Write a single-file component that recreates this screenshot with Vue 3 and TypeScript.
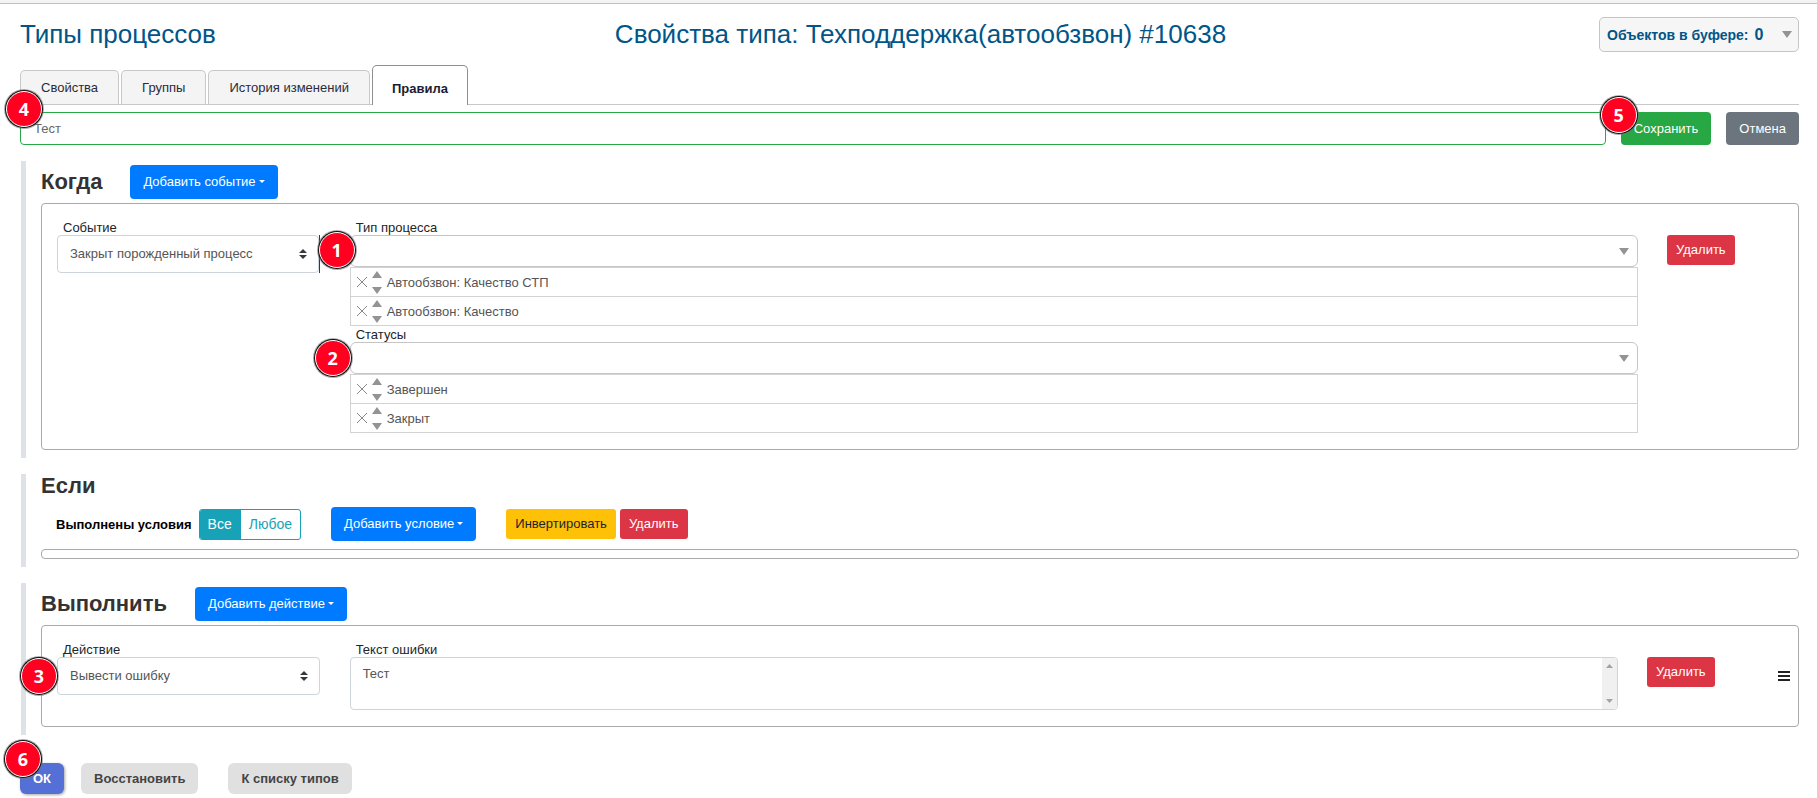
<script setup lang="ts">
import { ref } from 'vue'

interface ListField {
  id: string
  label: string
  marker: string
  items: string[]
}

const tabs: string[] = ['Свойства', 'Группы', 'История изменений', 'Правила']
const activeTab = ref('Правила')
const ruleName = ref('Тест')
const errorText = ref('Тест')
const matchMode = ref('all')

const listFields: ListField[] = [
  { id: 'process-type', label: 'Тип процесса', marker: '1', items: ['Автообзвон: Качество СТП', 'Автообзвон: Качество'] },
  { id: 'statuses', label: 'Статусы', marker: '2', items: ['Завершен', 'Закрыт'] },
]
</script>

<template>
  <div class="page">
    <div class="strip"></div>
    <main class="content">
      <header class="head">
        <h1 class="title">Типы процессов</h1>
        <h2 class="title title-center">Свойства типа: Техподдержка(автообзвон) #10638</h2>
        <div class="head-side">
          <button type="button" class="buffer">
            <span>Объектов в буфере: <span class="count">0</span></span>
            <svg width="10" height="7" viewBox="0 0 10 7"><path d="M0 0h10L5 7z" fill="#939393" /></svg>
          </button>
        </div>
      </header>

      <nav class="tabs">
        <button
          v-for="tab in tabs"
          :key="tab"
          type="button"
          class="tab"
          :class="{ active: tab === activeTab }"
          @click="activeTab = tab"
        >{{ tab }}</button>
      </nav>

      <div class="name-row">
        <div class="name-field">
          <input v-model="ruleName" class="name-input" type="text" aria-label="Название правила" />
          <span class="marker m4">4</span>
        </div>
        <div class="anchor">
          <button type="button" class="btn green">Сохранить</button>
          <span class="marker m5">5</span>
        </div>
        <button type="button" class="btn gray">Отмена</button>
      </div>

      <section class="block">
        <div class="block-head">
          <h3 class="block-title">Когда</h3>
          <button type="button" class="btn blue">Добавить событие<i class="caret"></i></button>
        </div>
        <div class="box">
          <div class="col-narrow">
            <label class="label" for="event">Событие</label>
            <div class="select-wrap focus-edge">
              <select id="event" class="select">
                <option>Закрыт порожденный процесс</option>
              </select>
              <svg class="sort" width="8" height="10" viewBox="0 0 8 10"><path d="M4 0l4 4H0zM4 10l4-4H0z" fill="#343a40" /></svg>
            </div>
          </div>
          <div class="col-wide stack">
            <div v-for="field in listFields" :key="field.id">
              <label class="label" :for="field.id">{{ field.label }}</label>
              <div class="combo">
                <input :id="field.id" class="combo-input" type="text" />
                <svg class="combo-arrow" width="10" height="7" viewBox="0 0 10 7"><path d="M0 0h10L5 7z" fill="#939393" /></svg>
                <span class="marker" :class="'m' + field.marker">{{ field.marker }}</span>
              </div>
              <ul class="picked">
                <li v-for="item in field.items" :key="item" class="picked-item">
                  <button type="button" class="icon-btn" aria-label="Убрать">
                    <svg width="10" height="10" viewBox="0 0 10 10"><path d="M0 0l10 10M10 0L0 10" stroke="#888" stroke-width="1" /></svg>
                  </button>
                  <span class="movers">
                    <button type="button" class="icon-btn" aria-label="Выше">
                      <svg width="10" height="7" viewBox="0 0 10 7"><path d="M0 7h10L5 0z" fill="#939393" /></svg>
                    </button>
                    <button type="button" class="icon-btn" aria-label="Ниже">
                      <svg width="10" height="7" viewBox="0 0 10 7"><path d="M0 0h10L5 7z" fill="#939393" /></svg>
                    </button>
                  </span>
                  <span>{{ item }}</span>
                </li>
              </ul>
            </div>
          </div>
          <div class="col-tail">
            <button type="button" class="btn small red">Удалить</button>
          </div>
        </div>
      </section>

      <section class="block flush">
        <h3 class="block-title">Если</h3>
        <div class="cond-row">
          <span id="cond-label" class="cond-label">Выполнены условия</span>
          <div class="segment" role="radiogroup" aria-labelledby="cond-label">
            <label class="seg" :class="{ on: matchMode === 'all' }">
              <input v-model="matchMode" class="seg-radio" type="radio" name="match" value="all" />Все
            </label>
            <label class="seg" :class="{ on: matchMode === 'any' }">
              <input v-model="matchMode" class="seg-radio" type="radio" name="match" value="any" />Любое
            </label>
          </div>
          <button type="button" class="btn blue">Добавить условие<i class="caret"></i></button>
          <div class="pair">
            <button type="button" class="btn small yellow">Инвертировать</button>
            <button type="button" class="btn small red">Удалить</button>
          </div>
        </div>
        <div class="box empty"></div>
      </section>

      <section class="block">
        <div class="block-head">
          <h3 class="block-title">Выполнить</h3>
          <button type="button" class="btn blue">Добавить действие<i class="caret"></i></button>
        </div>
        <div class="box">
          <div class="col-narrow">
            <label class="label" for="action">Действие</label>
            <div class="select-wrap">
              <select id="action" class="select">
                <option>Вывести ошибку</option>
              </select>
              <svg class="sort" width="8" height="10" viewBox="0 0 8 10"><path d="M4 0l4 4H0zM4 10l4-4H0z" fill="#343a40" /></svg>
              <span class="marker m3">3</span>
            </div>
          </div>
          <div class="col-wide">
            <label class="label" for="error-text">Текст ошибки</label>
            <div class="area-wrap">
              <textarea id="error-text" v-model="errorText" class="area"></textarea>
              <div class="scroll-track" aria-hidden="true">
                <svg width="7" height="4" viewBox="0 0 7 4"><path d="M0 4h7L3.5 0z" fill="#a3a3a3" /></svg>
                <svg width="7" height="4" viewBox="0 0 7 4"><path d="M0 0h7L3.5 4z" fill="#a3a3a3" /></svg>
              </div>
            </div>
          </div>
          <div class="col-tail with-handle">
            <button type="button" class="btn small red">Удалить</button>
            <button type="button" class="icon-btn handle" aria-label="Переместить">
              <svg width="12" height="10" viewBox="0 0 12 10"><path d="M0 0h12v2H0zM0 4h12v2H0zM0 8h12v2H0z" fill="#222" /></svg>
            </button>
          </div>
        </div>
      </section>

      <footer class="foot">
        <div class="anchor ok-wrap">
          <button type="button" class="foot-btn ok">ОК</button>
          <span class="marker m6">6</span>
        </div>
        <div class="foot-rest">
          <button type="button" class="foot-btn">Восстановить</button>
          <button type="button" class="foot-btn">К списку типов</button>
        </div>
      </footer>
    </main>
  </div>
</template>

<style>
body {
  margin: 0;
  background: #fff;
}
</style>

<style scoped>
.page,
.page * {
  box-sizing: border-box;
}
.page {
  font-family: "Liberation Sans", Arial, sans-serif;
  font-size: 13px;
  line-height: 15px;
  color: #212529;
}
button,
input,
select,
textarea {
  font-family: inherit;
  font-size: inherit;
  margin: 0;
}
.strip {
  height: 4px;
  background: #f4f4f4;
  border-bottom: 1px solid #c0c0c0;
}
.content {
  padding: 13px 18px 4px 20px;
}
.head {
  display: grid;
  grid-template-columns: 1fr auto 1fr;
  align-items: start;
}
.title {
  margin: 0;
  font-size: 26px;
  line-height: 34px;
  font-weight: 400;
  color: #005589;
}
.title-center {
  padding-left: 22px;
}
.head-side {
  display: flex;
  justify-content: flex-end;
}
.buffer {
  display: flex;
  align-items: center;
  justify-content: space-between;
  width: 200px;
  height: 35px;
  padding: 0 6px 0 7px;
  border: 1px solid #c5c5c5;
  border-radius: 5px;
  background: #f6f6f6;
  color: #005589;
  font-weight: 700;
  font-size: 14px;
  white-space: nowrap;
}
.count {
  margin-left: 2px;
  font-size: 16px;
}
.tabs {
  display: flex;
  align-items: flex-end;
  gap: 2px;
  margin-top: 13px;
  border-bottom: 1px solid #c8c8c8;
}
.tab {
  height: 34px;
  padding: 0 20px;
  border: 1px solid #c8c8c8;
  border-bottom: 0;
  border-radius: 5px 5px 0 0;
  background: #f4f4f4;
  color: #2b2b3b;
}
.tab.active {
  height: 40px;
  margin-bottom: -1px;
  padding: 6px 19px 0;
  border-color: #8f8f8f;
  background: #fff;
  color: #1b1b33;
  font-weight: 700;
}
.name-row {
  display: flex;
  gap: 15px;
  margin-top: 7px;
}
.name-field {
  position: relative;
  flex: 1;
}
.name-input {
  display: block;
  width: 100%;
  height: 33px;
  padding: 0 13px;
  border: 1px solid #28a745;
  border-radius: 4px;
  background: #fff;
  color: #666;
  outline: 0;
}
.anchor {
  position: relative;
}
.btn {
  height: 33px;
  padding: 0 13px;
  border: 0;
  border-radius: 4px;
  color: #fff;
  white-space: nowrap;
}
.green {
  background: #28a745;
}
.gray {
  background: #6c757d;
}
.blue {
  height: 34px;
  padding-bottom: 1px;
  background: #007bff;
}
.red {
  background: #dc3545;
}
.yellow {
  background: #ffc107;
  color: #212529;
}
.small {
  height: 30px;
  padding: 0 9px 2px;
  border-radius: 3px;
}
.caret {
  display: inline-block;
  margin-left: 3px;
  vertical-align: 3px;
  border-top: 3px solid;
  border-left: 3px solid transparent;
  border-right: 3px solid transparent;
}
.block {
  margin: 16px 0 0 1px;
  padding: 4px 0 8px 15px;
  border-left: 5px solid #dee2e6;
}
.block.flush {
  padding-top: 0;
}
.block-head {
  display: flex;
  align-items: center;
  gap: 28px;
  margin-bottom: 4px;
}
.block-title {
  margin: 0;
  padding-bottom: 2px;
  font-size: 22px;
  line-height: 23px;
  font-weight: 700;
  color: #333;
}
.box {
  display: flex;
  padding: 16px 0;
  border: 1px solid #a9a9a9;
  border-radius: 4px;
}
.box.empty {
  padding: 4px 0;
}
.col-narrow {
  flex: 0 0 16.6667%;
  padding: 0 15px;
}
.col-wide {
  flex: 1;
  min-width: 0;
  padding: 0 15px;
}
.stack {
  display: flex;
  flex-direction: column;
  gap: 1px;
}
.col-tail {
  flex: 0 0 145px;
  padding: 15px 8px 0 14px;
}
.col-tail.with-handle {
  flex-basis: 165px;
  display: flex;
  justify-content: space-between;
  align-items: flex-start;
}
.label {
  display: block;
  height: 15px;
  padding-left: 6px;
}
.select-wrap,
.combo,
.area-wrap {
  position: relative;
}
.select {
  display: block;
  width: 100%;
  height: 38px;
  padding: 0 30px 2px 12px;
  border: 1px solid #ced4da;
  border-radius: 4px;
  background: #fff;
  color: #555;
  appearance: none;
}
.focus-edge {
  border-right: 1px solid #343a40;
}
.sort {
  position: absolute;
  right: 12px;
  top: 14px;
}
.combo-input {
  display: block;
  width: 100%;
  height: 32px;
  padding: 0 28px 0 10px;
  border: 1px solid #c5c5c5;
  border-radius: 6px;
  background: #fff;
  outline: 0;
}
.combo-arrow {
  position: absolute;
  right: 9px;
  top: 13px;
}
.picked {
  margin: 0;
  padding: 0;
  list-style: none;
  border: 1px solid #d3d3d3;
  color: #555;
}
.picked-item {
  display: flex;
  align-items: center;
  gap: 5px;
  height: 28px;
  padding-left: 6px;
}
.picked-item + .picked-item {
  height: 29px;
  border-top: 1px solid #d3d3d3;
}
.icon-btn {
  display: block;
  padding: 0;
  border: 0;
  background: none;
  line-height: 0;
}
.icon-btn svg {
  display: block;
}
.movers {
  display: flex;
  flex-direction: column;
  gap: 9px;
}
.cond-row {
  display: flex;
  align-items: center;
  gap: 30px;
  margin: 8px 0;
  padding-left: 15px;
}
.cond-label {
  margin-right: -23px;
  font-weight: 700;
  color: #000;
}
.segment {
  display: flex;
  height: 31px;
  border: 1px solid #17a2b8;
  border-radius: 3px;
  overflow: hidden;
}
.seg {
  padding: 0 8px;
  font-size: 14px;
  line-height: 28px;
  color: #17a2b8;
}
.seg.on {
  padding: 0 9px 0 8px;
  background: #17a2b8;
  color: #fff;
}
.seg-radio {
  position: absolute;
  opacity: 0;
  pointer-events: none;
}
.pair {
  display: flex;
  gap: 4px;
}
.area {
  display: block;
  width: 100%;
  height: 53px;
  padding: 8px 28px 8px 12px;
  border: 1px solid #ced4da;
  border-radius: 4px;
  background: #fff;
  color: #555;
  line-height: 15px;
  resize: none;
  outline: 0;
}
.scroll-track {
  position: absolute;
  top: 1px;
  right: 1px;
  bottom: 1px;
  width: 15px;
  display: flex;
  flex-direction: column;
  align-items: center;
  justify-content: space-between;
  padding: 6px 0;
  border-radius: 0 3px 3px 0;
  background: #f0f0f0;
}
.handle {
  margin-top: 14px;
}
.foot {
  display: flex;
  margin-top: 28px;
}
.foot-btn {
  height: 31px;
  padding: 0 13px;
  border: 0;
  border-radius: 6px;
  background: #e0e0e0;
  color: #444;
  font-weight: 700;
}
.foot-btn.ok {
  background: #5470d6;
  color: #fff;
  box-shadow: 1px 1px 3px rgba(0, 0, 0, 0.35);
}
.ok-wrap {
  margin-right: 17px;
}
.foot-rest {
  display: flex;
  gap: 30px;
}
.marker {
  position: absolute;
  z-index: 2;
  width: 36px;
  height: 36px;
  border: 1px solid #fff;
  border-radius: 50%;
  background: #ff0021;
  box-shadow: 0 0 0 1px #111, 0 0 0 2px rgba(120, 120, 120, 0.6);
  color: #fff;
  font-family: "Open Sans", "Noto Sans", sans-serif;
  font-size: 18px;
  font-weight: 700;
  line-height: 35px;
  text-align: center;
}
.m1 {
  left: -31px;
  top: -3px;
}
.m2 {
  left: -35px;
  top: -2px;
}
.m3 {
  left: -36px;
  top: 1px;
}
.m4 {
  left: -14px;
  top: -21px;
}
.m5 {
  left: -20px;
  top: -15px;
}
.m6 {
  left: -15px;
  top: -22px;
}
</style>
